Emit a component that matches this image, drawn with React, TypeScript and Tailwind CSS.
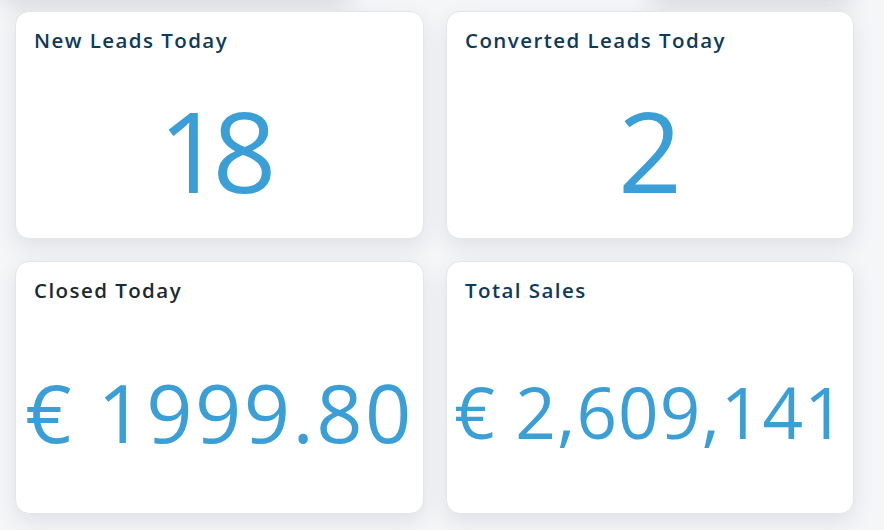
const STATS = [
  { title: "New Leads Today", value: "18", titleColor: "text-[#0f3a5a]", size: "text-[112px] tracking-[-0.09em] pt-[8px] pr-[14px]", tall: false },
  { title: "Converted Leads Today", value: "2", titleColor: "text-[#0f3a5a]", size: "text-[112px] pt-[8px]", tall: false },
  { title: "Closed Today", value: "€ 1999.80", titleColor: "text-[#1b2a31]", size: "text-[81px] tracking-[0.03em] pt-[6px]", tall: true },
  { title: "Total Sales", value: "€ 2,609,141", titleColor: "text-[#0f3a5a]", size: "text-[71px] tracking-[0.015em] pt-[6px]", tall: true },
];

const StatCard = ({ stat }: { stat: (typeof STATS)[number] }) => (
  <div
    className={`flex flex-col bg-white rounded-[14px] border border-[#e3e5e8] shadow-[0_8px_22px_rgba(30,40,60,0.10)] ${
      stat.tall ? "h-[253px]" : "h-[228px]"
    }`}
  >
    <h3 className={`pl-[18px] pr-5 pt-[15px] text-[20.5px] font-semibold leading-[26px] tracking-[0.07em] ${stat.titleColor}`}>
      {stat.title}
    </h3>
    <div className="flex-1 flex items-center justify-center">
      <span className={`whitespace-nowrap font-normal leading-none text-[#3a9fd6] ${stat.size}`}>
        {stat.value}
      </span>
    </div>
  </div>
);

export default function App() {
  return (
    <div
      className="w-[884px] h-[530px] overflow-hidden bg-[#f5f6f8]"
      style={{ fontFamily: "'Open Sans', 'Noto Sans', sans-serif" }}
    >
      {/* cards sitting above the viewport, only their shadow shows */}
      <div className="-mt-[72px] h-[72px] flex gap-[22px] pr-[30px]">
        <div className="w-[360px] rounded-[14px] bg-white shadow-[0_8px_22px_rgba(30,40,60,0.12)]" />
        <div className="w-[260px]" />
        <div className="w-[210px] rounded-[14px] bg-white shadow-[0_8px_22px_rgba(30,40,60,0.12)]" />
      </div>
      <div className="grid grid-cols-[409px_408px] gap-[22px] pl-[15px] pt-[11px]">
        {STATS.map((s) => (
          <StatCard key={s.title} stat={s} />
        ))}
      </div>
    </div>
  );
}
